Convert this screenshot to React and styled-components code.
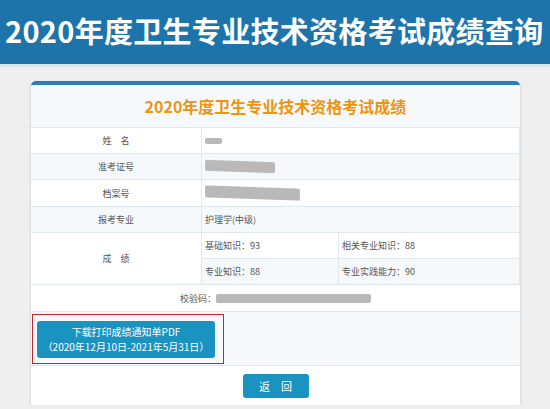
import React from 'react'
import { styled, createGlobalStyle } from 'styled-components'

const GlobalStyle = createGlobalStyle`
  html, body {
    margin: 0;
    padding: 0;
    background: #efefef;
    font-family: "Noto Sans CJK SC", "Noto Sans", sans-serif;
  }
  * { box-sizing: border-box; }
`

const scores = [
  ['基础知识：93', '相关专业知识：88'],
  ['专业知识：88', '专业实践能力：90'],
]

function App() {
  return (
    <>
      <GlobalStyle />
      <Header>
        <h1>2020年度卫生专业技术资格考试成绩查询</h1>
      </Header>
      <Page>
        <Card>
          <CardTitle>2020年度卫生专业技术资格考试成绩</CardTitle>
          <Table>
            <Label>姓&emsp;名</Label>
            <Value $span={2}><Blur $w={17} $h={6} /></Value>

            <Label $alt>准考证号</Label>
            <Value $span={2} $alt><Blur $w={70} $h={11} $slant /></Value>

            <Label $h={27}>档案号</Label>
            <Value $span={2} $h={27}><Blur $w={95} $h={12} $slant /></Value>

            <Label $alt>报考专业</Label>
            <Value $span={2} $alt>护理学(中级)</Value>

            <Label $rows={2}>成&emsp;绩</Label>
            {scores.map((row, i) => (
              <React.Fragment key={i}>
                <Value $alt={i === 1}>{row[0]}</Value>
                <Value $alt={i === 1}>{row[1]}</Value>
              </React.Fragment>
            ))}

            <Wide $h={27}>
              <span>校验码：</span>
              <Blur $w={155} $h={9} />
            </Wide>

            <Wide $alt $left $h={54}>
              <Highlight>
                <DownloadButton>
                  下载打印成绩通知单PDF<br />
                  （2020年12月10日-2021年5月31日）
                </DownloadButton>
              </Highlight>
            </Wide>

            <Wide $last $h={39}>
              <BackButton>返&emsp;回</BackButton>
            </Wide>
          </Table>
        </Card>
      </Page>
    </>
  )
}

const Header = styled.div`
  height: 67px;
  background: #1d74ab;
  border-bottom: 3px solid #d6e7ee;
  display: flex;
  align-items: center;
  padding: 0 0 4px 5px;
  h1 {
    margin: 0;
    color: #fff;
    font-size: 29px;
    font-weight: 700;
    letter-spacing: 0.3px;
    white-space: nowrap;
  }
`

const Page = styled.div`
  padding: 14px 30px 0 31px;
`

const Card = styled.div`
  background: #fff;
  border-top: 4px solid #2b7dbf;
  border-radius: 5px 5px 2px 2px;
  box-shadow: 0 1px 3px rgba(0, 0, 0, 0.18);
  overflow: hidden;
`

const CardTitle = styled.div`
  height: 43px;
  display: flex;
  align-items: center;
  justify-content: center;
  background: #f6f9fc;
  border-bottom: 1px solid #dfe8f0;
  color: #f0940e;
  font-size: 16px;
  font-weight: 700;
`

const Table = styled.div`
  display: grid;
  grid-template-columns: 171px 137px 181px;
  font-size: 9px;
  color: #555;
`

const Label = styled.div`
  grid-row: span ${p => p.$rows || 1};
  display: flex;
  align-items: center;
  justify-content: center;
  background: ${p => (p.$alt ? '#f5f9fc' : '#fff')};
  border-bottom: 1px solid #e0e8ef;
  border-right: 1px solid #e0e8ef;
`

const Value = styled.div`
  grid-column: span ${p => p.$span || 1};
  height: ${p => p.$h || 26}px;
  display: flex;
  align-items: center;
  padding-left: 3px;
  background: ${p => (p.$alt ? '#f5f9fc' : '#fff')};
  border-bottom: 1px solid #e0e8ef;
  border-right: 1px solid #e0e8ef;
`

const Wide = styled.div`
  grid-column: 1 / -1;
  height: ${p => p.$h}px;
  display: flex;
  align-items: center;
  justify-content: ${p => (p.$left ? 'flex-start' : 'center')};
  padding-left: ${p => (p.$left ? '1px' : '0')};
  background: ${p => (p.$alt ? '#f5f9fc' : '#fff')};
  border-bottom: ${p => (p.$last ? 'none' : '1px solid #e0e8ef')};
`

const Blur = styled.span`
  display: inline-block;
  width: ${p => p.$w}px;
  height: ${p => p.$h}px;
  background: #b9b9b9;
  border-radius: 2px;
  filter: blur(0.6px);
  transform: ${p => (p.$slant ? 'skewY(2deg)' : 'none')};
`

const Highlight = styled.div`
  border: 1px solid #c0262c;
  padding: 6px 8px 5px 4px;
`

const DownloadButton = styled.button`
  display: block;
  width: 178px;
  height: 37px;
  border: none;
  border-radius: 3px;
  background: #1a93c1;
  color: #fff;
  font-family: inherit;
  font-size: 10px;
  line-height: 15px;
  padding: 0;
  text-align: center;
`

const BackButton = styled.button`
  width: 66px;
  height: 24px;
  border: none;
  border-radius: 3px;
  background: #1a93c1;
  color: #fff;
  font-family: inherit;
  font-size: 11px;
  padding: 0;
`

export default App
